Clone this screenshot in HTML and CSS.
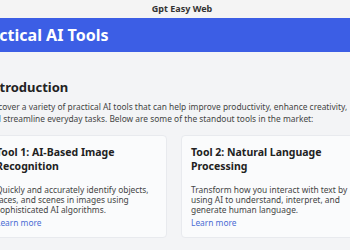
FILE: index.html
```html
<!DOCTYPE html>
<html lang="en">
<head>
<meta charset="utf-8">
<title>Gpt Easy Web</title>
<link rel="stylesheet" href="styles.css">
</head>
<body>
<div class="topbar">Gpt Easy Web</div>
<div class="page">
  <header class="hero"><h1>Practical AI Tools</h1></header>
  <main class="content">
    <section class="intro">
      <h2>Introduction</h2>
      <p>Discover a variety of practical AI tools that can help improve productivity, enhance creativity, and streamline everyday tasks. Below are some of the standout tools in the market:</p>
    </section>
    <div class="grid">
      <article class="card">
        <h3>Tool 1: AI-Based Image Recognition</h3>
        <p>Quickly and accurately identify objects, faces, and scenes in images using sophisticated AI algorithms.</p>
        <a class="more" href="#">Learn more</a>
      </article>
      <article class="card">
        <h3>Tool 2: Natural Language Processing</h3>
        <p>Transform how you interact with text by using AI to understand, interpret, and generate human language.</p>
        <a class="more" href="#">Learn more</a>
      </article>
    </div>
  </main>
</div>
</body>
</html>
```
FILE: styles.css
```css
html, body {
  margin: 0;
  padding: 0;
}
body {
  background: #f3f4f6;
  font-family: "Noto Sans", "Open Sans", sans-serif;
  color: #333;
  overflow: hidden;
  width: 350px;
  height: 250px;
}
.topbar {
  height: 18px;
  line-height: 17px;
  padding-left: 14px;
  text-align: center;
  font-size: 9px;
  font-weight: 700;
  color: #333;
  background: #f4f4f4;
}
.page {
  margin-left: -28px;
  width: 404px;
}
.hero {
  background: #3c5ee5;
  height: 34px;
  display: flex;
  align-items: center;
  padding-left: 1px;
}
.hero h1 {
  margin: 0;
  color: #fff;
  font-size: 16px;
  font-weight: 700;
}
.content {
  padding: 0 14px;
}
.intro h2 {
  margin: 27px 0 0;
  font-size: 13px;
  line-height: 16px;
  font-weight: 700;
  color: #222;
}
.intro p {
  margin: 6px 0 0;
  font-size: 8.4px;
  line-height: 11.5px;
  color: #444;
}
.grid {
  margin-top: 11px;
  display: grid;
  grid-template-columns: 1fr 1fr;
  gap: 14px;
}
.card {
  background: #fafbfc;
  border: 1px solid #e8eaee;
  border-radius: 4px;
  padding: 9px 9px 8px;
  height: 84px;
}
.card h3 {
  margin: 0;
  font-size: 10.5px;
  line-height: 14px;
  font-weight: 700;
  color: #222;
}
.card p {
  margin: 12px 0 0;
  font-size: 8.4px;
  line-height: 10px;
  color: #444;
}
.more {
  display: block;
  margin-top: 3px;
  font-size: 8.4px;
  line-height: 10px;
  color: #4a6cd4;
  text-decoration: none;
}
```
